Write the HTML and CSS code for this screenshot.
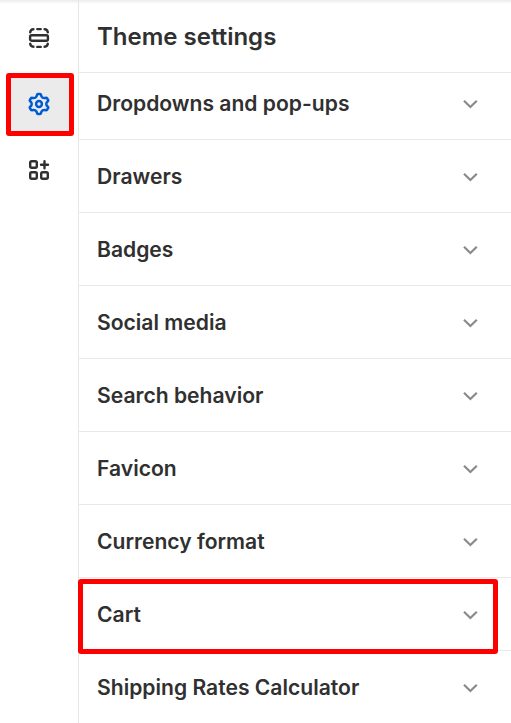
FILE: index.html
```html
<!DOCTYPE html>
<html lang="en">
<head>
<meta charset="utf-8">
<title>Theme settings</title>
<link rel="stylesheet" href="styles.css">
</head>
<body>
<svg width="0" height="0" class="defs"><symbol id="chev" viewBox="0 0 16 10"><path d="M2 1.700 8.400 8l6.400-6.300"/></symbol></svg>
<div class="app">
<nav class="rail">
<a class="tab"><svg viewBox="0 0 22 22"><path d="M2.200 5.300Q2.500 2.400 5.400 2.200M9.300 2.100h3.400M16.600 2.200Q19.500 2.400 19.800 5.300M2.200 16.700Q2.500 19.600 5.400 19.800M9.300 19.900h3.400M16.600 19.800Q19.500 19.600 19.800 16.700"/><rect x="2.100" y="8.300" width="17.800" height="5.400" rx="1.500"/></svg></a>
<a class="tab active"><svg class="cog" viewBox="-12 -12 24 24"><path d="M-1.100-9.900H1.100Q1.800-9.900 2-9.200L2.500-7.500Q3.400-5.900 5.200-5.900L6.900-6.300Q7.600-6.500 8-5.900L9.100-4Q9.500-3.400 9-2.900L7.700-1.600Q6.900 0 7.700 1.600L9 2.900Q9.500 3.400 9.100 4L8 5.900Q7.600 6.500 6.900 6.300L5.200 5.900Q3.400 5.900 2.500 7.500L2 9.200Q1.800 9.900 1.100 9.900H-1.100Q-1.800 9.900-2 9.200L-2.500 7.500Q-3.400 5.900-5.200 5.900L-6.900 6.300Q-7.600 6.500-8 5.900L-9.100 4Q-9.500 3.400-9 2.900L-7.700 1.600Q-6.900 0-7.700-1.600L-9-2.900Q-9.500-3.400-9.100-4L-8-5.900Q-7.600-6.500-6.900-6.300L-5.200-5.900Q-3.400-5.900-2.500-7.500L-2-9.200Q-1.800-9.900-1.100-9.900z"/><circle r="2.900"/></svg></a>
<a class="tab"><svg viewBox="0 0 22 22"><rect x="2.200" y="2.200" width="6.600" height="6.600" rx="1.500"/><rect x="2.200" y="13.200" width="6.600" height="6.600" rx="1.500"/><rect x="13.200" y="13.200" width="6.600" height="6.600" rx="1.500"/><path d="M16.500 2.200v7M13 5.700h7"/></svg></a>
</nav>
<main class="panel">
<h1>Theme settings</h1>
<ul>
<li class="first"><span>Dropdowns and pop-ups</span><svg><use href="#chev"/></svg></li>
<li><span>Drawers</span><svg><use href="#chev"/></svg></li>
<li><span>Badges</span><svg><use href="#chev"/></svg></li>
<li><span>Social media</span><svg><use href="#chev"/></svg></li>
<li><span>Search behavior</span><svg><use href="#chev"/></svg></li>
<li><span>Favicon</span><svg><use href="#chev"/></svg></li>
<li><span>Currency format</span><svg><use href="#chev"/></svg></li>
<li class="marked"><span>Cart</span><svg><use href="#chev"/></svg></li>
<li><span>Shipping Rates Calculator</span><svg><use href="#chev"/></svg></li>
</ul>
</main>
</div>
</body>
</html>
```
FILE: styles.css
```css
*, *::after { box-sizing: border-box; }
body { margin: 0; background: #fff; color: #303030; font-family: Inter, sans-serif; overflow: hidden; }
.defs { position: absolute; }
.app { display: flex; height: 723px; overflow: hidden; background: linear-gradient(#ebebeb, #f0f0f0 1px, #fff 4px); }
.rail { width: 79px; border-right: 1px solid #e6e6e6; padding: 7px 5px 0 6px; flex: none; }
.tab { display: flex; align-items: center; justify-content: center; width: 68px; height: 63px; margin-bottom: 3px; padding-bottom: 2px; }
.tab svg { width: 22px; height: 22px; fill: none; stroke: #303030; stroke-width: 2.4; stroke-linejoin: round; stroke-linecap: round; margin-right: 2px; }
.tab.active { background: #ebebeb; border: 5px solid #fe0000; border-radius: 3px; }
.tab.active .cog { width: 24px; height: 24px; stroke: #005bd3; stroke-width: 2.5; }
.panel { flex: 1; }
h1 { margin: 0; height: 73px; border-bottom: 1px solid #e9e9e9; padding-left: 18px; font-size: 24px; line-height: 73px; font-weight: 600; }
ul { margin: 0; padding: 0; list-style: none; }
li { position: relative; display: flex; align-items: flex-start; justify-content: space-between; height: 73px; border-bottom: 1px solid #e9e9e9; padding: 24px 33px 0 18px; font-size: 21.1px; line-height: 26px; font-weight: 600; }
.first { height: 67px; padding-top: 18px; }
li svg { width: 16px; height: 10px; margin-top: 8px; fill: none; stroke: #8a8a8a; stroke-width: 2.2; }
.marked::after { content: ""; position: absolute; left: -1px; right: 13px; top: 1px; height: 75px; border: 5px solid #fe0000; border-radius: 3px; z-index: 1; }
```
